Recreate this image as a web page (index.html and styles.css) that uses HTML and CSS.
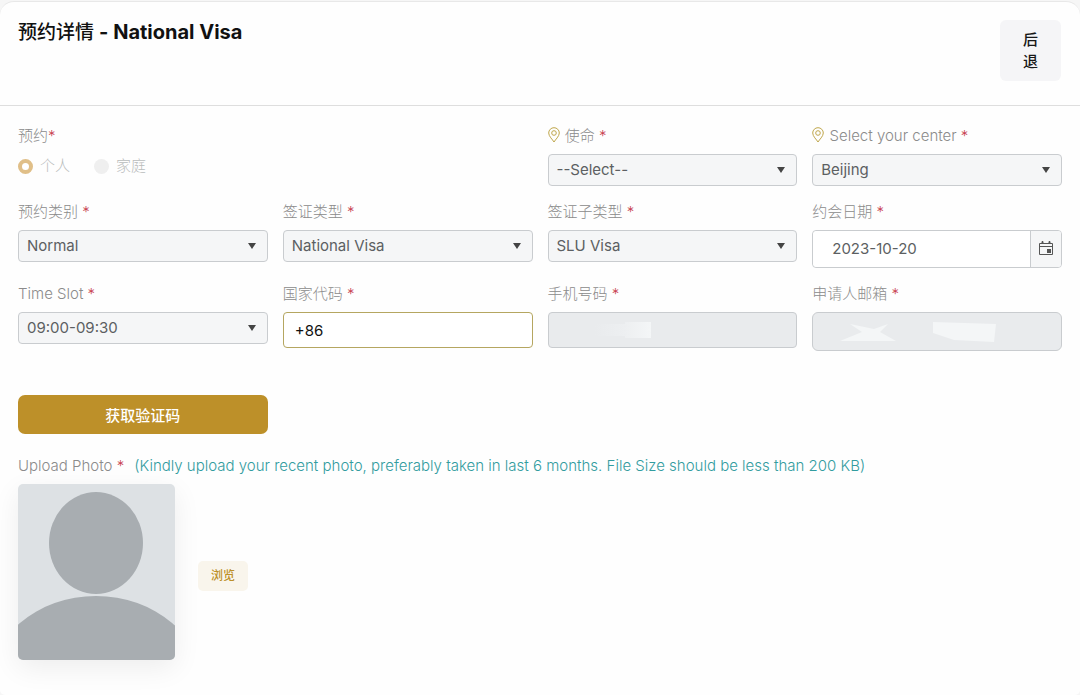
FILE: index.html
```html
<!DOCTYPE html>
<html lang="zh-CN">
<head>
  <meta charset="UTF-8">
  <title>预约详情</title>
  <meta name="viewport" content="width=device-width, initial-scale=1.0">
  <link rel="stylesheet" href="styles.css">
</head>
<body>

<div class="card">
  <header class="card-header">
    <h1>预约详情 <span>- National Visa</span></h1>
    <button type="button" class="btn-back">后退</button>
  </header>

  <form class="card-body">
    <div class="form-grid">
      <fieldset class="form-group wide" disabled>
        <legend>预约<span class="required">*</span></legend>
        <div class="radios">
          <label class="radio"><input type="radio" name="appointmentFor" checked> 个人</label>
          <label class="radio"><input type="radio" name="appointmentFor"> 家庭</label>
        </div>
      </fieldset>
      <div class="form-group">
        <label for="mission">
          <svg class="pin" viewBox="0 0 12 16" aria-hidden="true"><path d="M6 15C4.6 12.600.7 9.300.7 6a5.300 5.300 0 0 1 10.600 0C11.300 9.300 7.400 12.600 6 15Z"/><circle cx="6" cy="6" r="2.300"/></svg>
          使命 <span class="required">*</span>
        </label>
        <select id="mission"><option>--Select--</option></select>
      </div>
      <div class="form-group">
        <label for="center">
          <svg class="pin" viewBox="0 0 12 16" aria-hidden="true"><path d="M6 15C4.6 12.600.7 9.300.7 6a5.300 5.300 0 0 1 10.600 0C11.300 9.300 7.400 12.600 6 15Z"/><circle cx="6" cy="6" r="2.300"/></svg>
          Select your center <span class="required">*</span>
        </label>
        <select id="center"><option>Beijing</option></select>
      </div>

      <div class="form-group">
        <label for="category">预约类别 <span class="required">*</span></label>
        <select id="category"><option>Normal</option></select>
      </div>
      <div class="form-group">
        <label for="visaType">签证类型 <span class="required">*</span></label>
        <select id="visaType"><option>National Visa</option></select>
      </div>
      <div class="form-group">
        <label for="visaSubType">签证子类型 <span class="required">*</span></label>
        <select id="visaSubType"><option>SLU Visa</option></select>
      </div>
      <div class="form-group">
        <label for="date">约会日期 <span class="required">*</span></label>
        <div class="date-picker">
          <input type="text" id="date" value="2023-10-20">
          <button type="button" aria-label="选择日期">
            <svg viewBox="0 0 16 16" aria-hidden="true"><path class="line" d="M1.500 3.500h13v11h-13zM1.500 6.500h13M4.500 1v3M11.500 1v3"/><path d="M9 9h4v4H9zM3.500 1.500h2v2h-2zM10.500 1.500h2v2h-2z"/></svg>
          </button>
        </div>
      </div>

      <div class="form-group">
        <label for="slot">Time Slot <span class="required">*</span></label>
        <select id="slot"><option>09:00-09:30</option></select>
      </div>
      <div class="form-group">
        <label for="countryCode">国家代码 <span class="required">*</span></label>
        <input type="text" id="countryCode" class="country-code" value="+86">
      </div>
      <div class="form-group">
        <label for="mobile">手机号码 <span class="required">*</span></label>
        <input type="text" id="mobile" class="mobile" disabled>
      </div>
      <div class="form-group">
        <label for="email">申请人邮箱 <span class="required">*</span></label>
        <input type="text" id="email" class="email" disabled>
      </div>
    </div>

    <div class="form-grid actions">
      <button type="button" class="btn-code">获取验证码</button>
    </div>

    <div class="upload-label">
      <label for="browse">Upload Photo <span class="required">*</span></label>
      <span class="hint">(Kindly upload your recent photo, preferably taken in last 6 months. File Size should be less than 200 KB)</span>
    </div>
    <div class="upload">
      <svg class="photo" viewBox="0 0 157 176" role="img" aria-label="Photo">
        <rect width="157" height="176" fill="#dde1e4"/>
        <ellipse cx="78" cy="59" rx="47" ry="51"/>
        <ellipse cx="78" cy="205" rx="108" ry="93"/>
      </svg>
      <button type="button" id="browse" class="btn-browse">浏览</button>
    </div>
  </form>
</div>

</body>
</html>
```
FILE: styles.css
```css
* {
  box-sizing: border-box;
}

body {
  margin: 0;
  padding-top: 1px;
  background: #f6f6f6;
  color: #8b8b8b;
  font: 300 15px/24px Inter, "Noto Sans CJK SC", sans-serif;
}

.card {
  min-height: calc(100vh - 1px);
  background: #fefefe;
  border-top: 1px solid #e8e8e8;
  border-radius: 14px 14px 5px 5px;
}

.card-header {
  display: flex;
  justify-content: space-between;
  align-items: flex-start;
  padding: 18px 19px 24px 18px;
  border-bottom: 1px solid #dedede;
}

h1 {
  margin: 0;
  color: #111;
  font-size: 19px;
  font-weight: 500;
  line-height: 24px;
}

h1 span {
  font-size: 20px;
  font-weight: 700;
}

button {
  border: none;
  cursor: pointer;
  font-family: inherit;
}

.btn-back {
  width: 61px;
  height: 61px;
  padding: 0 22px;
  background: #f5f5f7;
  color: #181818;
  border-radius: 6px;
  font-size: 15px;
  font-weight: 500;
  line-height: 22px;
}

.card-body {
  padding: 18px;
}

.form-grid {
  display: grid;
  grid-template-columns: repeat(4, 1fr);
  gap: 14px 15px;
}

.form-group {
  display: flex;
  flex-direction: column;
  gap: 6px;
  min-width: 0;
}

.wide {
  display: block;
  grid-column: span 2;
  margin: 0;
  padding: 0;
  border: none;
}

legend {
  padding: 0;
}

.required {
  color: #c8404f;
}

.pin {
  width: 12px;
  height: 16px;
  margin-right: 1px;
  vertical-align: -2px;
  fill: none;
  stroke: #bfa64b;
}

.radios {
  display: flex;
  gap: 24px;
  margin-top: 6px;
}

.radio {
  display: flex;
  align-items: center;
  gap: 7px;
  color: #b9bcbc;
}

.radio input {
  appearance: none;
  width: 15px;
  height: 15px;
  margin: 0;
  background: #efefef;
  border: none;
  border-radius: 50%;
}

.radio input:checked {
  background: #fff;
  border: 4px solid #e0bf88;
}

select,
input {
  width: 100%;
  border: 1px solid #c9cccf;
  border-radius: 4px;
  font: inherit;
  font-weight: 400;
}

select {
  appearance: none;
  height: 32px;
  padding: 0 28px 0 8px;
  background: #f5f6f7 url("data:image/svg+xml,%3Csvg xmlns='http://www.w3.org/2000/svg' width='8' height='6'%3E%3Cpath d='M0 0h8L4 6z' fill='%23444'/%3E%3C/svg%3E") no-repeat right 11px center;
  color: #5c5f62;
}

.date-picker {
  display: flex;
  height: 38px;
  background: #fff;
  border: 1px solid #c9cccf;
  border-radius: 4px;
  overflow: hidden;
}

.date-picker input {
  flex: 1;
  min-width: 0;
  padding: 0 19px;
  border: none;
  color: #5c5f62;
}

.date-picker button {
  width: 31px;
  padding: 0;
  background: #f5f6f7;
  border-left: 1px solid #c9cccf;
}

.date-picker svg {
  width: 16px;
  height: 16px;
  fill: #555;
}

.date-picker .line {
  fill: none;
  stroke: #555;
}

.country-code {
  height: 36px;
  padding: 0 11px;
  background: #fff;
  border-color: #b5a660;
  color: #111;
}

.mobile,
.email {
  background-color: #e9ebed;
  background-repeat: no-repeat;
}

.mobile {
  height: 36px;
  background-image: linear-gradient(90deg, #edeff1, #f4f6f7), linear-gradient(90deg, #e9ebed, #edeff1);
  background-position: 76px 9px, 46px 11px;
  background-size: 26px 16px, 30px 12px;
}

.email {
  height: 39px;
  border-radius: 6px;
  background-image: url("data:image/svg+xml,%3Csvg xmlns='http://www.w3.org/2000/svg' width='156' height='20'%3E%3Cg fill='%23f4f6f7'%3E%3Cpath d='M0 19l22-9-12-8 24 5 14-5-8 8 16 9z'/%3E%3Cpath d='M93 0l63 2-2 18-40-2-21-7z'/%3E%3C/g%3E%3C/svg%3E");
  background-position: 27px 9px;
}

.actions {
  margin-top: 44px;
}

.btn-code {
  height: 39px;
  background: #bd9029;
  color: #fff;
  border-radius: 7px;
  font-size: 15px;
  font-weight: 500;
}

.upload-label {
  display: flex;
  gap: 10px;
  margin: 20px 0 6px;
}

.hint {
  color: #329c9f;
}

.upload {
  display: flex;
  align-items: center;
  gap: 23px;
}

.photo {
  width: 157px;
  height: 176px;
  border-radius: 5px;
  box-shadow: 0 8px 28px rgba(0, 0, 0, 0.07);
  fill: #a8adb1;
}

.btn-browse {
  margin-top: 8px;
  padding: 5px 13px;
  background: #f9f5ec;
  color: #bd9029;
  border-radius: 5px;
  font-size: 12px;
  font-weight: 500;
  line-height: 20px;
}
```
